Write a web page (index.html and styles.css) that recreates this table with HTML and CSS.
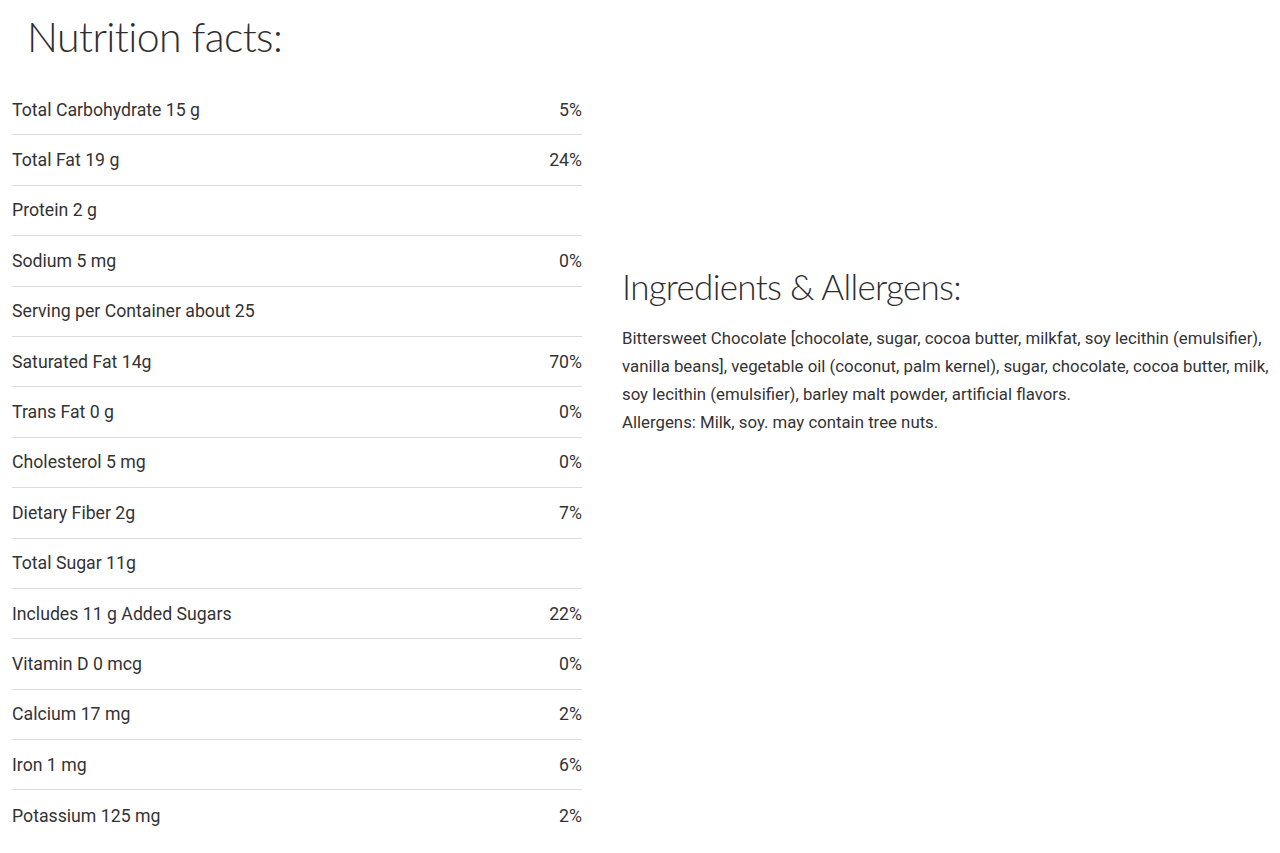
FILE: index.html
```html
<!DOCTYPE html>
<html lang="en">
<head>
<meta charset="utf-8">
<title>Nutrition facts</title>
<link rel="stylesheet" href="styles.css">
</head>
<body>
<div class="page">
  <section class="nutrition">
    <h2 class="title title-left">Nutrition facts:</h2>
    <ul class="facts">
      <li class="row"><span>Total Carbohydrate 15 g</span><span>5%</span></li>
      <li class="row"><span>Total Fat 19 g</span><span>24%</span></li>
      <li class="row"><span>Protein 2 g</span><span></span></li>
      <li class="row"><span>Sodium 5 mg</span><span>0%</span></li>
      <li class="row"><span>Serving per Container about 25</span><span></span></li>
      <li class="row"><span>Saturated Fat 14g</span><span>70%</span></li>
      <li class="row"><span>Trans Fat 0 g</span><span>0%</span></li>
      <li class="row"><span>Cholesterol 5 mg</span><span>0%</span></li>
      <li class="row"><span>Dietary Fiber 2g</span><span>7%</span></li>
      <li class="row"><span>Total Sugar 11g</span><span></span></li>
      <li class="row"><span>Includes 11 g Added Sugars</span><span>22%</span></li>
      <li class="row"><span>Vitamin D 0 mcg</span><span>0%</span></li>
      <li class="row"><span>Calcium 17 mg</span><span>2%</span></li>
      <li class="row"><span>Iron 1 mg</span><span>6%</span></li>
      <li class="row"><span>Potassium 125 mg</span><span>2%</span></li>
    </ul>
  </section>
  <section class="ingredients">
    <h2 class="title title-right">Ingredients &amp; Allergens:</h2>
    <p class="text">Bittersweet Chocolate [chocolate, sugar, cocoa butter, milkfat, soy lecithin (emulsifier), vanilla beans], vegetable oil (coconut, palm kernel), sugar, chocolate, cocoa butter, milk, soy lecithin (emulsifier), barley malt powder, artificial flavors.<br>Allergens: Milk, soy. may contain tree nuts.</p>
  </section>
</div>
</body>
</html>
```
FILE: styles.css
```css
* { box-sizing: border-box; }
html, body { margin: 0; padding: 0; background: #fff; }
body {
  font-family: Roboto, "Liberation Sans", sans-serif;
  color: #333;
}
.page {
  display: flex;
  align-items: flex-start;
  padding-left: 12px;
}
.nutrition {
  width: 570px;
  flex: none;
}
.title {
  margin: 0;
  font-family: Lato, "Open Sans", sans-serif;
  font-weight: 300;
  color: #2e2e2e;
}
.title-left {
  font-size: 41px;
  letter-spacing: -0.6px;
  line-height: 50px;
  padding: 12px 0 0 15px;
  height: 85px;
}
.facts {
  list-style: none;
  margin: 0;
  padding: 0;
}
.row {
  display: flex;
  justify-content: space-between;
  align-items: center;
  height: 50.4px;
  font-size: 17.7px;
  line-height: 48px;
  color: #333;
  border-bottom: 1px solid #dcdcdc;
}
.row:last-child { border-bottom: none; }
.ingredients {
  margin-left: 40px;
  padding-top: 262px;
  flex: 1;
}
.title-right {
  font-size: 35px;
  letter-spacing: -0.7px;
  line-height: 48px;
}
.text {
  margin: 14px 0 0;
  font-size: 16.8px;
  line-height: 28px;
  color: #333;
}
```
